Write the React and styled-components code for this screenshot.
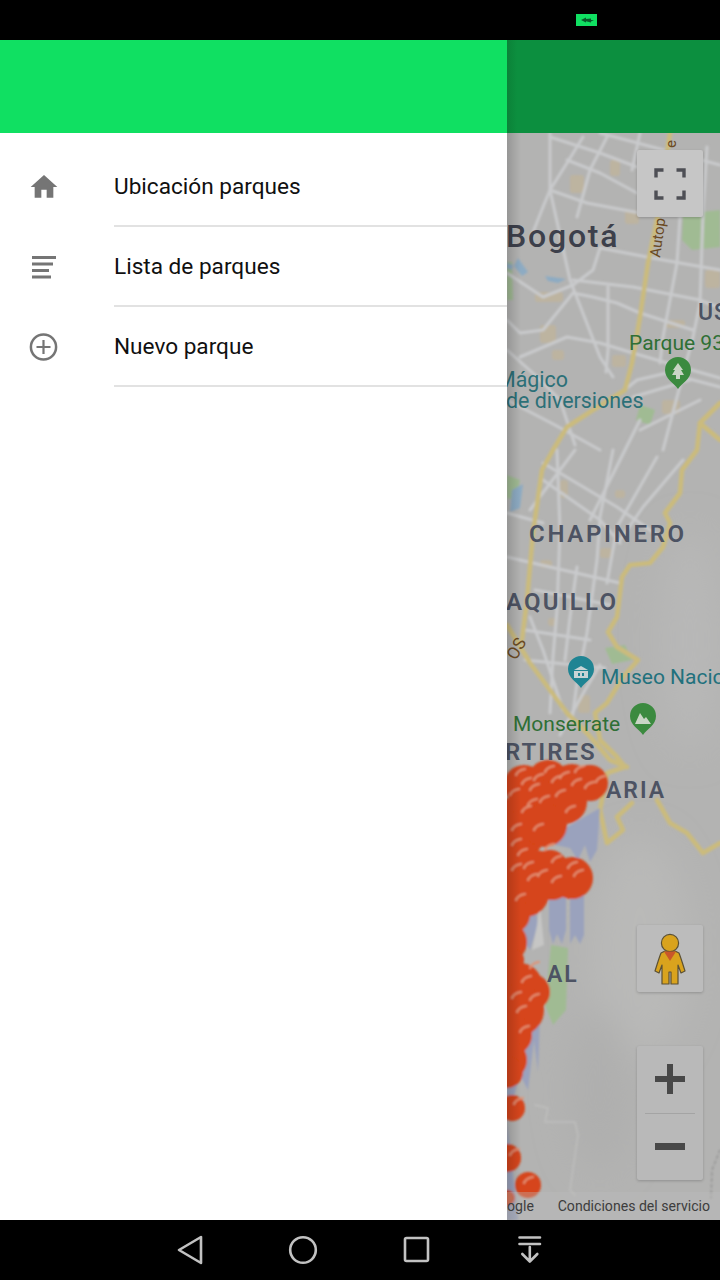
import React from 'react';
import styled, { createGlobalStyle } from 'styled-components';

const GlobalStyle = createGlobalStyle`
  html, body {
    margin: 0;
    padding: 0;
    background: #000;
  }
  body {
    font-family: Roboto, "Noto Sans", sans-serif;
  }
`;

const MENU_ITEMS = [
  { label: 'Ubicación parques', icon: 'home' },
  { label: 'Lista de parques', icon: 'list' },
  { label: 'Nuevo parque', icon: 'add' },
];

const ROADS = [
  'M550 133L550 190L570 280L600 357L613 377',
  'M583 137L567 163L550 190L543 207L530 240',
  'M607 137L590 170L577 217',
  'M550 137L600 153L637 167',
  'M567 160L600 173L637 193',
  'M550 190L587 203L640 213',
  'M600 248L647 257L680 263L720 270',
  'M600 248L593 270L573 285',
  'M507 273L543 297L573 285',
  'M573 280L633 287L700 300L720 308',
  'M573 293L543 330L520 333L507 320',
  'M573 293L593 297L617 303L640 313L693 330',
  'M608 287L608 350L606 372',
  'M520 357L567 337L600 343L633 353L667 363L720 378',
  'M680 217L677 263L663 337L660 363',
  'M707 147L703 213L700 303L693 337L677 397L663 450',
  'M720 387L667 373L637 380L622 392',
  'M633 397L690 380',
  'M640 430L700 400',
  'M507 350L535 375L560 400L575 445',
  'M600 133L720 165',
  'M640 133L632 170',
  'M507 400L555 425L600 450',
  'M543 463L617 507L660 537',
  'M543 480L600 520L620 543',
  'M507 513L543 523',
  'M613 450L600 517L597 560L587 633L577 683L572 720',
  'M657 457L617 527L607 583',
  'M683 460L643 507L620 540',
  'M507 557L550 567L620 583',
  'M530 617L543 650L563 710',
  'M557 450L560 530L557 610L553 657L550 713',
  'M577 567L570 617L565 660',
  'M640 420L590 520',
  'M575 450L530 510',
  'M535 590L610 605',
  'M525 630L590 640',
  'M525 660L605 668',
  'M560 735L585 690L600 665',
];

const HIGHWAYS = [
  'M670 133L657 220L648 263L640 317L632 363L625 390L593 410L567 427L553 450L542 470L533 533L527 600L522 640',
  'M507 625L530 663L567 713L587 733L610 760L627 767',
  'M720 403L700 423L697 450L682 470L680 493L665 513L670 523L663 547L650 563L630 565L622 577L617 617L608 632L617 647L638 660L623 677L607 703L595 713L600 740L617 757L625 767L607 773L600 810L607 843L623 830L617 817L632 803',
  'M657 800L670 823L687 833L703 853L720 843',
  'M720 440L700 423',
];

const PARKS = [
  'M683 214L720 210L720 247L692 250L682 240Z',
  'M507 262L512 262L513 300L507 300Z',
  'M507 475L520 480L516 500L507 498Z',
  'M605 648L625 645L632 660L612 664Z',
  'M551 945L568 948L566 1010L553 1025L545 1005Z',
  'M640 405L655 410L650 425L636 420Z',
];

const BLOCKS = [
  [570, 175, 14, 18], [610, 160, 10, 16], [625, 210, 14, 14], [535, 292, 28, 10],
  [540, 325, 16, 18], [552, 350, 12, 10], [612, 355, 14, 12], [665, 320, 20, 8],
  [705, 270, 15, 18], [662, 400, 18, 14], [560, 480, 8, 18], [600, 548, 12, 10],
  [540, 560, 12, 8], [615, 490, 10, 8], [578, 695, 12, 18], [548, 618, 8, 8],
];

const LAKES = [
  'M518 258L528 272L522 276L514 266Z',
  'M545 276L566 279L558 283L548 281Z',
  'M512 490L523 484L520 508L510 512Z',
  'M507 263L513 265L512 270L507 268Z',
];

const RED_BLOBS = [
  [524, 785, 20], [548, 780, 20], [572, 784, 20], [590, 783, 18], [537, 805, 26], [565, 802, 22],
  [515, 815, 18], [520, 835, 24], [545, 825, 22], [515, 860, 24], [535, 870, 20], [550, 868, 18],
  [572, 878, 21], [552, 880, 20], [525, 893, 24], [512, 915, 18], [507, 942, 20], [513, 960, 11],
  [520, 985, 22], [532, 992, 18], [518, 1010, 26], [512, 1035, 20], [507, 1060, 20], [507, 1072, 16],
  [512, 1108, 13], [507, 1158, 14], [528, 1185, 13], [507, 1198, 8],
];

const HIGHLIGHTS = [
  [516, 775], [522, 784], [530, 790], [545, 772], [552, 782], [560, 778], [575, 772], [585, 788],
  [596, 782], [540, 802], [556, 796], [566, 812], [522, 812], [512, 830], [534, 830], [545, 850],
  [518, 855], [512, 870], [528, 880], [552, 862], [568, 868], [574, 876], [552, 882], [516, 900],
  [530, 968], [522, 982], [512, 998], [530, 1000], [517, 1012], [520, 1032], [514, 1104], [524, 1183],
  [510, 1155], [534, 780], [572, 785], [528, 805], [510, 795], [512, 845], [524, 868], [538, 876],
];

const MAP_LABELS = [
  { text: 'Bogotá', x: 506, y: 247, size: 32, weight: 500, spacing: 1.8, color: '#3d404b' },
  { text: 'US', x: 698, y: 320, size: 23, weight: 500, spacing: 1, color: '#4b5263' },
  { text: 'Parque 93', x: 629, y: 350, size: 21, weight: 400, spacing: 0, color: '#2f6f35' },
  { text: 'Mágico', x: 497, y: 387, size: 21.4, weight: 400, spacing: 0, color: '#2c7078' },
  { text: 'de diversiones', x: 506, y: 408, size: 21.4, weight: 400, spacing: 0, color: '#2c7078' },
  { text: 'CHAPINERO', x: 529, y: 542, size: 24, weight: 600, spacing: 2.7, color: '#4d5363' },
  { text: 'AQUILLO', x: 506, y: 610, size: 24, weight: 600, spacing: 2.2, color: '#4d5363' },
  { text: 'Museo Nacional', x: 601, y: 684, size: 21, weight: 400, spacing: 0, color: '#22717d' },
  { text: 'Monserrate', x: 513, y: 731, size: 21, weight: 400, spacing: 0, color: '#2f6f35' },
  { text: 'RTIRES', x: 505, y: 760, size: 24, weight: 600, spacing: 2, color: '#4d5363' },
  { text: 'ARIA', x: 606, y: 798, size: 23, weight: 600, spacing: 2, color: '#4d5363' },
  { text: 'AL', x: 547, y: 982, size: 23, weight: 600, spacing: 2, color: '#4d5363' },
];

const Screen = styled.div`
  width: 720px;
  height: 1280px;
  display: flex;
  flex-direction: column;
  background: #000;
  overflow: hidden;
`;

const StatusBar = styled.div`
  height: 40px;
  flex: none;
  display: flex;
  align-items: center;
  justify-content: flex-end;
  padding-right: 123px;
  background: #000;
`;

const ChargeBadge = styled.svg`
  width: 21px;
  height: 12px;
  display: block;
`;

const Body = styled.div`
  flex: 1;
  min-height: 0;
  display: flex;
`;

const Drawer = styled.aside`
  width: 507px;
  flex: none;
  display: flex;
  flex-direction: column;
  background: #fff;
`;

const DrawerHeader = styled.div`
  height: 93px;
  flex: none;
  background: #10e062;
`;

const MenuList = styled.nav`
  padding-top: 14px;
  display: flex;
  flex-direction: column;
`;

const MenuRow = styled.div`
  height: 80px;
  display: flex;
`;

const MenuIconCell = styled.div`
  width: 114px;
  flex: none;
  display: flex;
  align-items: center;
  padding-left: 28px;
  box-sizing: border-box;
  color: #757575;
`;

const MenuLabel = styled.div`
  flex: 1;
  display: flex;
  align-items: center;
  padding-top: 1px;
  box-sizing: border-box;
  border-bottom: 2px solid #e2e2e2;
  font-size: 22.6px;
  color: #101010;
`;

const MapPane = styled.section`
  flex: 1;
  min-width: 0;
  display: flex;
  flex-direction: column;
`;

const DimmedAppBar = styled.div`
  height: 93px;
  flex: none;
  background: linear-gradient(90deg, #0b8238 0, #0c8f3f 10px);
`;

const MapArea = styled.div`
  flex: 1;
  position: relative;
  overflow: hidden;
  background: #b3b3b2;
`;

const MapDrawing = styled.svg`
  display: block;
  width: 213px;
  height: 1087px;
`;

const EdgeShadow = styled.div`
  position: absolute;
  inset: 0 auto 0 0;
  width: 14px;
  background: linear-gradient(90deg, rgba(0, 0, 0, 0.16), rgba(0, 0, 0, 0));
`;

const MapControl = styled.div`
  position: absolute;
  left: 130px;
  top: ${props => props.$top}px;
  width: 66px;
  height: ${props => props.$height || 66}px;
  display: flex;
  flex-direction: column;
  align-items: center;
  justify-content: center;
  background: ${props => props.$bg || '#c6c6c6'};
  border-radius: 2px;
  box-shadow: 0 1px 3px rgba(0, 0, 0, 0.2);
`;

const ZoomPart = styled.div`
  width: 100%;
  flex: 1;
  display: flex;
  align-items: center;
  justify-content: center;
`;

const ZoomDivider = styled.div`
  width: 50px;
  height: 1px;
  flex: none;
  background: #a4a4a4;
`;

const MapFooter = styled.div`
  position: absolute;
  left: 0;
  right: 0;
  bottom: 0;
  height: 28px;
  display: flex;
  align-items: center;
  justify-content: space-between;
  padding-right: 10px;
  box-sizing: border-box;
  font-size: 14.1px;
  color: #3d3d3d;
  background: rgba(190, 190, 190, 0.35);
`;

const NavBar = styled.div`
  height: 60px;
  flex: none;
  display: flex;
  align-items: center;
  padding-left: 172px;
  gap: 77px;
  background: #000;
`;

const NavIcon = styled.svg`
  width: 36px;
  height: 36px;
  display: block;
  fill: none;
  stroke: #c2c2c2;
  stroke-width: 2.6;
  stroke-linejoin: round;
  stroke-linecap: round;
`;

const MenuIcon = ({ name }) => {
  if (name === 'home') {
    return (
      <svg width="32" height="32" viewBox="0 0 24 24" fill="currentColor">
        <path d="M10 20v-6h4v6h5v-8h3L12 3 2 12h3v8z" />
      </svg>
    );
  }
  if (name === 'list') {
    return (
      <svg width="32" height="32" viewBox="0 0 32 32" fill="currentColor">
        <rect x="4" y="5" width="24" height="3" />
        <rect x="4" y="11.5" width="21" height="3" />
        <rect x="4" y="18" width="17" height="3" />
        <rect x="4" y="24.5" width="19" height="3" />
      </svg>
    );
  }
  return (
    <svg width="32" height="32" viewBox="0 0 32 32" fill="none" stroke="currentColor">
      <circle cx="15.5" cy="16" r="12.6" strokeWidth="2.5" />
      <path d="M15.5 9v14M8.5 16h14" strokeWidth="2.2" />
    </svg>
  );
};

const MapPin = ({ x, y, color, children }) => (
  <g transform={`translate(${x} ${y})`}>
    <path d="M0 15C-4 9-13 5-13-4a13 13 0 0 1 26 0C13 5 4 9 0 15Z" fill={color} />
    {children}
  </g>
);

const MapCanvas = () => (
  <MapDrawing viewBox="507 133 213 1087">
    <defs>
      <filter id="soft">
        <feGaussianBlur stdDeviation="0.8" />
      </filter>
      <filter id="terrain" x="-50%" y="-50%" width="200%" height="200%">
        <feGaussianBlur stdDeviation="18" />
      </filter>
    </defs>
    <g filter="url(#terrain)">
      <ellipse cx="640" cy="950" rx="50" ry="110" fill="#b9b9b8" />
      <ellipse cx="600" cy="1090" rx="30" ry="80" fill="#afafae" />
      <ellipse cx="690" cy="640" rx="30" ry="110" fill="#b8b8b7" />
    </g>
    <g filter="url(#soft)">
      {BLOCKS.map(([x, y, w, h]) => (
        <rect key={`${x}-${y}`} x={x} y={y} width={w} height={h} rx="3" fill="#bdb4a0" />
      ))}
      {PARKS.map(d => <path key={d} d={d} fill="#a0bb93" />)}
      {LAKES.map(d => <path key={d} d={d} fill="#8dabc3" />)}
      <g fill="none" strokeLinejoin="round" strokeLinecap="round">
        {ROADS.map(d => <path key={d} d={d} stroke="#c9cacc" strokeWidth="3" />)}
        {HIGHWAYS.map(d => <path key={d} d={d} stroke="#cbbb7d" strokeWidth="4.6" />)}
        <path d="M535 1105L548 1108L545 1122L575 1122L578 1135L570 1190L575 1195" stroke="#bfbfbe" strokeWidth="1.4" />
        <path d="M720 1150L712 1170L711 1198" stroke="#8d8d8d" strokeWidth="1.2" strokeDasharray="3 3" />
      </g>

      <path d="M545 840L600 808L597 850L590 862L585 845L578 860L570 848L555 845Z" fill="#9aa2bd" />
      <path d="M549 885L566 885L566 930L562 944L557 934L553 944L549 930ZM570 885L584 885L584 935L580 944L575 935L570 944Z" fill="#9aa2bd" />
      <path d="M507 925L534 900L538 925L530 950L523 940L507 945Z" fill="#9aa2bd" />
      <path d="M507 1020L540 1015L538 1072L534 1040L528 1090L520 1075L507 1120L518 1220L507 1220Z" fill="#9aa2bd" />
      <path d="M540 905L544 945L532 950L537 925Z" fill="#c6c6c5" />

      {RED_BLOBS.map(([x, y, r]) => <circle key={`${x}-${y}`} cx={x} cy={y} r={r} fill="#d6451a" />)}
      <g fill="none" stroke="#e29274" strokeWidth="2.2" strokeLinecap="round">
        {HIGHLIGHTS.map(([x, y]) => (
          <path key={`${x}-${y}`} d={`M${x} ${y}q2 -5 9 -6`} />
        ))}
      </g>
    </g>

    <MapPin x={678} y={374} color="#3b8a3f">
      <path d="M0-11L5-4H3L6 1H2V5H-2V1H-6L-3-4H-5Z" fill="#c9d5c5" />
    </MapPin>
    <MapPin x={581} y={673} color="#1f8493">
      <path d="M-7-3L0-7L7-3ZM-7-2H7V5H-7Z" fill="#c7d4d6" />
      <path d="M-3 0H-1V3H-3ZM1 0H3V3H1Z" fill="#1f8493" />
    </MapPin>
    <MapPin x={643} y={720} color="#3b8a3f">
      <path d="M-8 4L-3-7L1-1L3-3L8 4Z" fill="#c9d5c5" />
    </MapPin>

    {MAP_LABELS.map(label => (
      <text
        key={label.text}
        x={label.x}
        y={label.y}
        fontFamily="Roboto, sans-serif"
        fontSize={label.size}
        fontWeight={label.weight}
        letterSpacing={label.spacing}
        fill={label.color}
      >
        {label.text}
      </text>
    ))}
    <text transform="translate(660 258) rotate(-82)" fontFamily="Roboto, sans-serif" fontSize="15" fill="#6b4a22">Autop</text>
    <text transform="translate(676 148) rotate(-90)" fontFamily="Roboto, sans-serif" fontSize="15" fill="#6b4a22">e</text>
    <text transform="translate(516 661) rotate(-60)" fontFamily="Roboto, sans-serif" fontSize="17" fill="#6b4a22">OS</text>
  </MapDrawing>
);

const Pegman = () => (
  <svg width="34" height="54" viewBox="0 -2 34 54">
    <g stroke="#5c5134" strokeWidth="1.2" strokeLinejoin="round" fill="#d9a31d">
      <path d="M8 19C6 24 4 31 2 37L6 39L9 31V50H16V38H18V50H25V31L28 39L32 37C30 31 28 24 26 19L22 17H12Z" />
      <circle cx="17" cy="9" r="8.6" />
    </g>
    <path d="M11 17.5H23L17 27Z" fill="#c9572a" />
  </svg>
);

const App = () => (
  <Screen>
    <GlobalStyle />
    <StatusBar>
      <ChargeBadge viewBox="0 0 21 12">
        <rect width="21" height="12" fill="#10e062" />
        <path d="M5 6L10 3.5V5L15 4.5V6L18 6L15 7.5V8.5L10 7.2V8.5Z" fill="#0a5a2c" />
      </ChargeBadge>
    </StatusBar>

    <Body>
      <Drawer>
        <DrawerHeader />
        <MenuList>
          {MENU_ITEMS.map(item => (
            <MenuRow key={item.label}>
              <MenuIconCell><MenuIcon name={item.icon} /></MenuIconCell>
              <MenuLabel>{item.label}</MenuLabel>
            </MenuRow>
          ))}
        </MenuList>
      </Drawer>

      <MapPane>
        <DimmedAppBar />
        <MapArea>
          <MapCanvas />
          <EdgeShadow />

          <MapControl $top={17} $height={67}>
            <svg width="32" height="32" viewBox="0 0 32 32" fill="none" stroke="#4e4f55" strokeWidth="3.4">
              <path d="M2 9.5V2H9.5M22.5 2H30V9.5M30 22.5V30H22.5M9.5 30H2V22.5" />
            </svg>
          </MapControl>

          <MapControl $top={792} $height={67} $bg="#bcbcbc">
            <Pegman />
          </MapControl>

          <MapControl $top={913} $height={134} $bg="#b9b9b9">
            <ZoomPart>
              <svg width="30" height="30" viewBox="0 0 30 30" fill="#484848">
                <path d="M12 0H18V12H30V18H18V30H12V18H0V12H12Z" />
              </svg>
            </ZoomPart>
            <ZoomDivider />
            <ZoomPart>
              <svg width="30" height="8" viewBox="0 0 30 8" fill="#484848">
                <rect width="30" height="7" />
              </svg>
            </ZoomPart>
          </MapControl>

          <MapFooter>
            <span>ogle</span>
            <span>Condiciones del servicio</span>
          </MapFooter>
        </MapArea>
      </MapPane>
    </Body>

    <NavBar>
      <NavIcon viewBox="0 0 36 36">
        <path d="M29 5V31L7 18Z" />
      </NavIcon>
      <NavIcon viewBox="0 0 36 36">
        <circle cx="18" cy="18" r="12.8" />
      </NavIcon>
      <NavIcon viewBox="0 0 36 36">
        <rect x="7" y="6" width="23" height="23" rx="1.5" />
      </NavIcon>
      <NavIcon viewBox="0 0 36 36">
        <path d="M8.5 5.5H29M8.5 12H29M18.8 15V29M11.3 22L18.8 29.5L26.3 22" />
      </NavIcon>
    </NavBar>
  </Screen>
);

export default App;
